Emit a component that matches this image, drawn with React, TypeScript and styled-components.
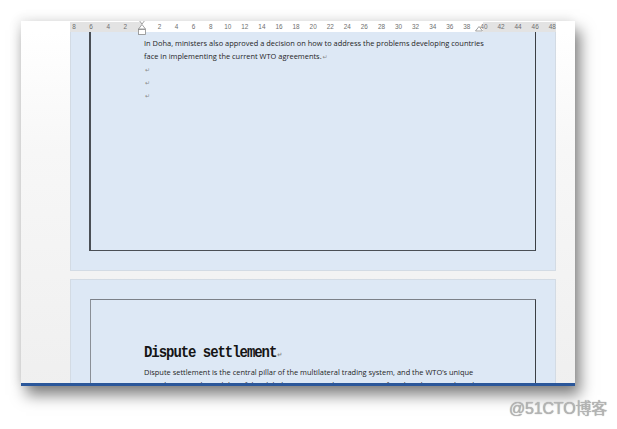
import React from "react";
import styled, { createGlobalStyle } from "styled-components";

const Global = createGlobalStyle`
  html, body { margin: 0; padding: 0; background: #ffffff; }
  #root { width: 617px; height: 429px; }
`;

const Canvas = styled.div`
  position: relative;
  width: 617px;
  height: 429px;
  overflow: hidden;
  background: #ffffff;
  padding: 21px 0 0 21px;
  box-sizing: border-box;
`;

const Window = styled.div`
  width: 554px;
  height: 365px;
  display: flex;
  flex-direction: column;
  background: #ffffff;
  box-shadow: 5px 9px 14px rgba(0, 0, 0, 0.5), -3px -3px 10px rgba(0, 0, 0, 0.07);
  overflow: hidden;
`;

const TopRow = styled.div`
  display: flex;
  height: 11px;
  padding-top: 1px;
  box-sizing: border-box;
  background: #ffffff;
  flex-shrink: 0;
`;

const Spacer = styled.div<{ $w: number }>`
  width: ${(p) => p.$w}px;
  flex-shrink: 0;
`;

const Ruler = styled.div`
  width: 486px;
  height: 10px;
  flex-shrink: 0;
  background: linear-gradient(
    to right,
    #e3e3e3 72px,
    #ffffff 72px,
    #ffffff 413px,
    #e3e3e3 413px
  );
  overflow: visible;
  display: flex;
  align-items: center;
`;

const RulerStrip = styled.div`
  display: flex;
  margin-left: -4.5px;
`;

const Tick = styled.span`
  position: relative;
  width: 17.08px;
  flex-shrink: 0;
  text-align: center;
  font-family: "Liberation Sans", Arial, sans-serif;
  font-size: 6.4px;
  line-height: 10px;
  color: #6f6f6f;
`;

const Marker = styled.svg`
  position: absolute;
  left: 50%;
  transform: translateX(-50%);
  z-index: 2;
`;

const Workspace = styled.div`
  flex: 1;
  display: flex;
  flex-direction: column;
  gap: 8px;
  padding-left: 49px;
  background: linear-gradient(to bottom, #ffffff 0px, #f7f7f7 120px, #efefef 365px);
  overflow: hidden;
`;

const Page = styled.div<{ $h: number; $top?: boolean }>`
  width: 486px;
  height: ${(p) => p.$h}px;
  flex-shrink: 0;
  box-sizing: border-box;
  background: #dde8f5;
  border: 1px solid #d3dbe4;
  border-top: ${(p) => (p.$top ? "1px solid #d3dbe4" : "none")};
  padding: ${(p) => (p.$top ? "19px 19px 0 19px" : "0 19px 19px 18px")};
  display: flex;
`;

const Frame = styled.div<{ $top?: boolean }>`
  flex: 1;
  box-sizing: border-box;
  border-left: 2px solid #4a4f55;
  border-right: 1px solid #3b3f44;
  border-bottom: ${(p) => (p.$top ? "none" : "1px solid #4a4f55")};
  border-top: ${(p) => (p.$top ? "1px solid #7b8088" : "none")};
  ${(p) => (p.$top ? "border-left: 1px solid #8a8f96;" : "")}
  padding: ${(p) => (p.$top ? "45px 0 0 53px" : "5px 0 0 53px")};
  display: flex;
  flex-direction: column;
`;

const Body = styled.p`
  margin: 0;
  width: 345px;
  font-family: "Open Sans", "Liberation Sans", sans-serif;
  font-size: 7.45px;
  line-height: 13px;
  color: #1e1e1e;
  white-space: nowrap;
`;

const Mark = styled.span`
  font-family: "DejaVu Sans", sans-serif;
  font-size: 6px;
  color: #8a8a8a;
  margin-left: 1px;
`;

const Heading = styled.h2`
  margin: 0 0 3px 0;
  font-family: "Liberation Mono", "Courier New", monospace;
  font-weight: bold;
  font-size: 14px;
  letter-spacing: -1.05px;
  line-height: 16px;
  color: #151515;
  transform: scaleY(1.15);
  transform-origin: left center;
`;

const StatusBar = styled.div`
  height: 3px;
  flex-shrink: 0;
  background: #2b579a;
`;

const Watermark = styled.div`
  position: absolute;
  right: 10px;
  bottom: 10px;
  font-family: "Liberation Sans", "Noto Sans CJK SC", sans-serif;
  font-size: 16px;
  color: #b4b4b4;
  text-shadow: 0 0 1px #8c8c8c;
  letter-spacing: -0.2px;
`;

const left = ["8", "6", "4", "2"];
const right = Array.from({ length: 24 }, (_, i) => String((i + 1) * 2));

export default function App() {
  return (
    <Canvas>
      <Global />
      <Window>
        <TopRow>
          <Spacer $w={49} />
          <Ruler>
            <RulerStrip>
              {left.map((n, i) => (
                <Tick key={"l" + i}>{n}</Tick>
              ))}
              <Tick>
                <Marker width="9" height="18" viewBox="0 0 9 18" style={{ top: -3 }}>
                  <path d="M1 0.5 H8 L4.5 5 Z" fill="#fff" stroke="#8a8a8a" strokeWidth="0.8" />
                  <path d="M4.5 5.5 L8 10 H1 Z" fill="#fff" stroke="#8a8a8a" strokeWidth="0.8" />
                  <rect x="1" y="10.5" width="7" height="5" fill="#fff" stroke="#8a8a8a" strokeWidth="0.8" />
                </Marker>
              </Tick>
              {right.map((n) => (
                <Tick key={n}>
                  {n === "40" && (
                    <Marker width="9" height="8" viewBox="0 0 9 8" style={{ top: 4, left: "20%" }}>
                      <path d="M4.5 0.5 L8 5 H1 Z" fill="#fff" stroke="#8a8a8a" strokeWidth="0.8" />
                    </Marker>
                  )}
                  {n}
                </Tick>
              ))}
            </RulerStrip>
          </Ruler>
        </TopRow>
        <Workspace>
          <Page $h={239}>
            <Frame>
              <Body>
                In Doha, ministers also approved a decision on how to address the problems developing countries
                <br />
                face in implementing the current WTO agreements.<Mark>↵</Mark>
                <br />
                <Mark>↵</Mark>
                <br />
                <Mark>↵</Mark>
                <br />
                <Mark>↵</Mark>
              </Body>
            </Frame>
          </Page>
          <Page $h={120} $top>
            <Frame $top>
              <Heading>
                Dispute settlement<Mark>↵</Mark>
              </Heading>
              <Body>
                Dispute settlement is the central pillar of the multilateral trading system, and the WTO’s unique
                <br />
                contribution to the stability of the global economy. Without a means of settling disputes, the rules
              </Body>
            </Frame>
          </Page>
        </Workspace>
        <StatusBar />
      </Window>
      <Watermark>@51CTO博客</Watermark>
    </Canvas>
  );
}
